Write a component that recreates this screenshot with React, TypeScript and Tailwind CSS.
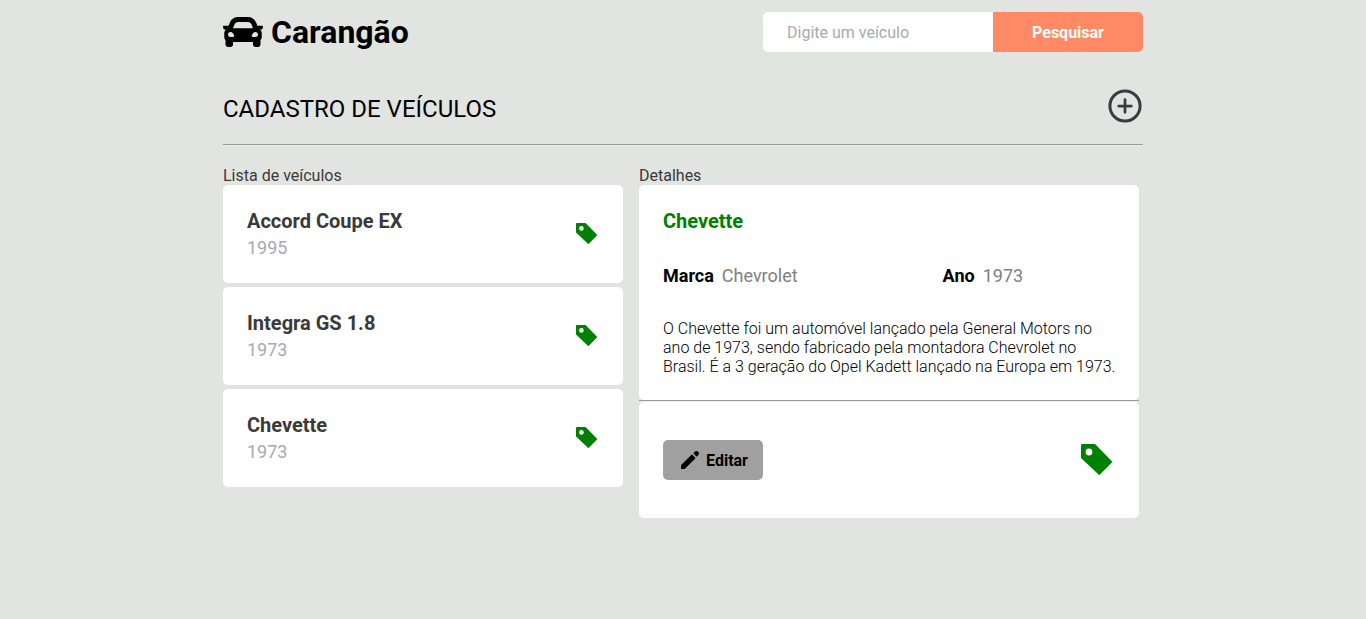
import { FaCar } from "react-icons/fa";

const vehicles = [
  { name: "Accord Coupe EX", year: 1995 },
  { name: "Integra GS 1.8", year: 1973 },
  { name: "Chevette", year: 1973 },
];

function TagIcon({ className }: { className: string }) {
  return (
    <svg viewBox="0 0 31 31" className={className} fill="green" fillRule="evenodd">
      <path d="M1.4 0H13.2q.8 0 1.3.5L30.6 17.1q.8.8 0 1.6L19 30.6q-.7.7-1.4 0L.5 14.4Q0 13.9 0 13.2V1.4Q0 0 1.4 0ZM8 4.6a3.4 3.4 0 1 0 0 6.8a3.4 3.4 0 0 0 0-6.8Z" />
    </svg>
  );
}

function AddIcon() {
  return (
    <svg viewBox="0 0 24 24" className="size-10 -mr-0.5" fill="none" stroke="#3a3a40">
      <circle cx="12" cy="12" r="9.05" strokeWidth="1.8" />
      <path d="M12 8.2v7.6M8.2 12h7.6" strokeWidth="1.65" strokeLinecap="round" />
    </svg>
  );
}

function PencilIcon() {
  return (
    <svg viewBox="0 0 24 24" className="size-6" fill="currentColor">
      <path d="M3 17.46v3.04c0 .28.22.5.5.5h3.04c.13 0 .26-.05.35-.15L17.1 10.65q.6-.6 0-1.2L14.55 6.9q-.6-.6-1.2 0L3.15 17.1c-.1.1-.15.22-.15.36z" />
      <path d="M17 3.6a2.2 2.2 0 0 1 3 0l.4.4a2.2 2.2 0 0 1 0 3l-1.2 1.2q-.5.5-1 0L15.8 5.8q-.5-.5 0-1z" />
    </svg>
  );
}

export default function App() {
  return (
    <div className="min-h-screen bg-[#e1e4e0] font-['Roboto',sans-serif] text-[#3a3a3a]">
      <div className="mx-auto w-[920px] pt-3">
        <header className="flex h-10 items-center justify-between">
          <div className="flex items-center gap-2 text-black">
            <FaCar size={40} />
            <h1 className="text-[32px] leading-10 font-bold">Carangão</h1>
          </div>
          <form className="flex h-10">
            <input
              placeholder="Digite um veículo"
              className="w-[230px] rounded-l-[5px] bg-white px-6 pt-0.5 text-base outline-none placeholder:text-[#a8a8b3]"
            />
            <button type="button" className="w-[150px] rounded-r-[5px] bg-[#ff8a65] pt-0.5 font-bold text-white">
              Pesquisar
            </button>
          </form>
        </header>

        <div className="mt-[34px] flex h-10 items-center justify-between">
          <h2 className="pt-[5px] text-2xl text-black">CADASTRO DE VEÍCULOS</h2>
          <AddIcon />
        </div>
        <hr className="mt-[18px] border-t border-b border-t-[#9a9a9a] border-b-[#eeeeee]" />

        <div className="mt-5 flex gap-4">
          <section className="w-[400px]">
            <p className="h-[19px] leading-[19px]">Lista de veículos</p>
            <div className="flex flex-col gap-1">
              {vehicles.map((v) => (
                <div key={v.name} className="flex h-[98px] justify-between rounded-[5px] bg-white px-6 pt-6">
                  <div>
                    <strong className="block text-xl leading-6 font-bold">{v.name}</strong>
                    <span className="mt-1 block text-lg leading-[21px] text-[#a8a8b3]">{v.year}</span>
                  </div>
                  <TagIcon className="mt-3.5 mr-0.5 size-[21px]" />
                </div>
              ))}
            </div>
          </section>

          <section className="w-[500px]">
            <p className="h-[19px] leading-[19px]">Detalhes</p>
            <div className="h-[215px] rounded-[5px] bg-white px-6 pt-6">
              <strong className="block text-xl leading-6 font-bold text-[green]">Chevette</strong>
              <div className="mt-8 flex text-lg leading-[21px]">
                <div className="flex w-[279.6px] gap-2">
                  <strong className="font-bold text-black">Marca</strong>
                  <span className="text-[gray]">Chevrolet</span>
                </div>
                <div className="flex gap-2">
                  <strong className="font-bold text-black">Ano</strong>
                  <span className="text-[gray]">1973</span>
                </div>
              </div>
              <p className="mt-[33px] text-base leading-[19px] font-light whitespace-nowrap text-black">
                O Chevette foi um automóvel lançado pela General Motors no
                <br />
                ano de 1973, sendo fabricado pela montadora Chevrolet no
                <br />
                Brasil. É a 3 geração do Opel Kadett lançado na Europa em 1973.
              </p>
            </div>
            <hr className="border-t border-b border-t-[#9a9a9a] border-b-[#eeeeee]" />
            <div className="flex h-[116px] items-center justify-between rounded-[5px] bg-white px-6">
              <button className="flex h-10 w-[100px] items-center justify-center gap-1 rounded-[5px] bg-[#a0a0a0] font-bold text-black">
                <PencilIcon />
                <span className="pt-0.5">Editar</span>
              </button>
              <TagIcon className="mr-[3px] mb-0.5 size-[31px]" />
            </div>
          </section>
        </div>
      </div>
    </div>
  );
}
